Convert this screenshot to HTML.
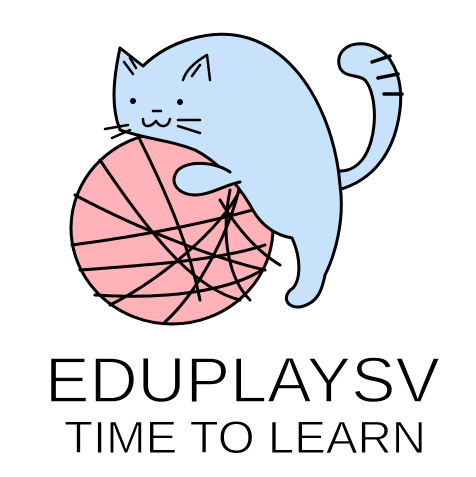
<!DOCTYPE html>
<html><head><style>
html,body{margin:0;padding:0;background:#fff;width:476px;height:477px;overflow:hidden}
</style></head><body>
<svg width="476" height="477" viewBox="0 0 476 477" xmlns="http://www.w3.org/2000/svg">
<g stroke="#000" stroke-width="3" stroke-linecap="round" stroke-linejoin="round" fill="none">
<!-- tail -->
<path d="M338,190 C375,180 395,150 400,110 C404,75 390,48 365,44 C345,42 335,55 340,68 C345,78 358,74 365,80 C378,95 378,140 362,160 C352,172 342,172 330,170 Z" fill="#c9e2fc"/>
<path d="M372,62 L390,56 M378,78 L398,74 M384,94 L402,94" stroke-width="3.5"/>
<!-- ball -->
<ellipse cx="172" cy="228" rx="101" ry="96" fill="#ffb3b8"/>
<g stroke-width="3">
<path d="M100,160 C160,250 200,290 240,300"/>
<path d="M75,195 C140,230 220,260 265,270"/>
<path d="M72,245 C150,235 220,220 270,205"/>
<path d="M80,270 C150,265 220,260 265,245"/>
<path d="M110,305 C160,280 220,230 240,190"/>
<path d="M165,322 C200,290 230,230 240,185"/>
<path d="M140,140 C170,200 190,250 200,300"/>
<path d="M95,295 C170,300 230,290 262,270"/>
<path d="M230,190 C220,240 230,280 250,300"/>
</g>
<!-- body -->
<path d="M120,130 C112,110 112,85 120,48 L143,66 C170,40 210,30 240,36 C300,48 335,120 340,185 C345,220 335,255 325,275 C322,290 318,303 300,307 C285,308 282,295 293,288 C300,280 302,260 292,238 C275,235 260,225 250,205 C235,180 215,160 195,150 C170,140 150,140 120,130 Z" fill="#c9e2fc"/>
<path d="M220,200 C235,225 255,250 280,265" />
<!-- paw -->
<path d="M230,172 C215,162 190,160 178,170 C168,182 178,195 195,195 C210,195 225,185 240,182" fill="#c9e2fc"/>
<path d="M240,170 L240,190" stroke="none"/>
<!-- ears inner -->
<path d="M124,62 L133,74 M130,58 L136,68" stroke-width="2.5"/>
<path d="M207,55 L210,80 M207,55 C195,62 186,70 183,80 M200,65 L192,76" stroke-width="2.5"/>
<!-- face -->
<circle cx="133" cy="101" r="3" fill="#000" stroke="none"/>
<circle cx="180" cy="102" r="3" fill="#000" stroke="none"/>
<path d="M153,111 L161,111" stroke-width="2.5"/>
<path d="M143,119 C143,128 150,128 156,121 C160,128 168,128 170,119" stroke-width="2.5"/>
<path d="M105,129 L128,125 M112,138 L130,130 M178,120 L200,120 M178,126 L200,133" stroke-width="2.5"/>
</g>
<g font-family="'Liberation Sans',sans-serif" fill="#000">
<text x="45" y="402" font-size="64" textLength="395" lengthAdjust="spacingAndGlyphs" style="font-weight:normal" stroke="#fff" stroke-width="1.5" paint-order="normal">EDUPLAYSV</text>
<text x="64" y="453" font-size="45" textLength="362" lengthAdjust="spacingAndGlyphs" stroke="#fff" stroke-width="1">TIME TO LEARN</text>
</g>
</svg>
</body></html>
